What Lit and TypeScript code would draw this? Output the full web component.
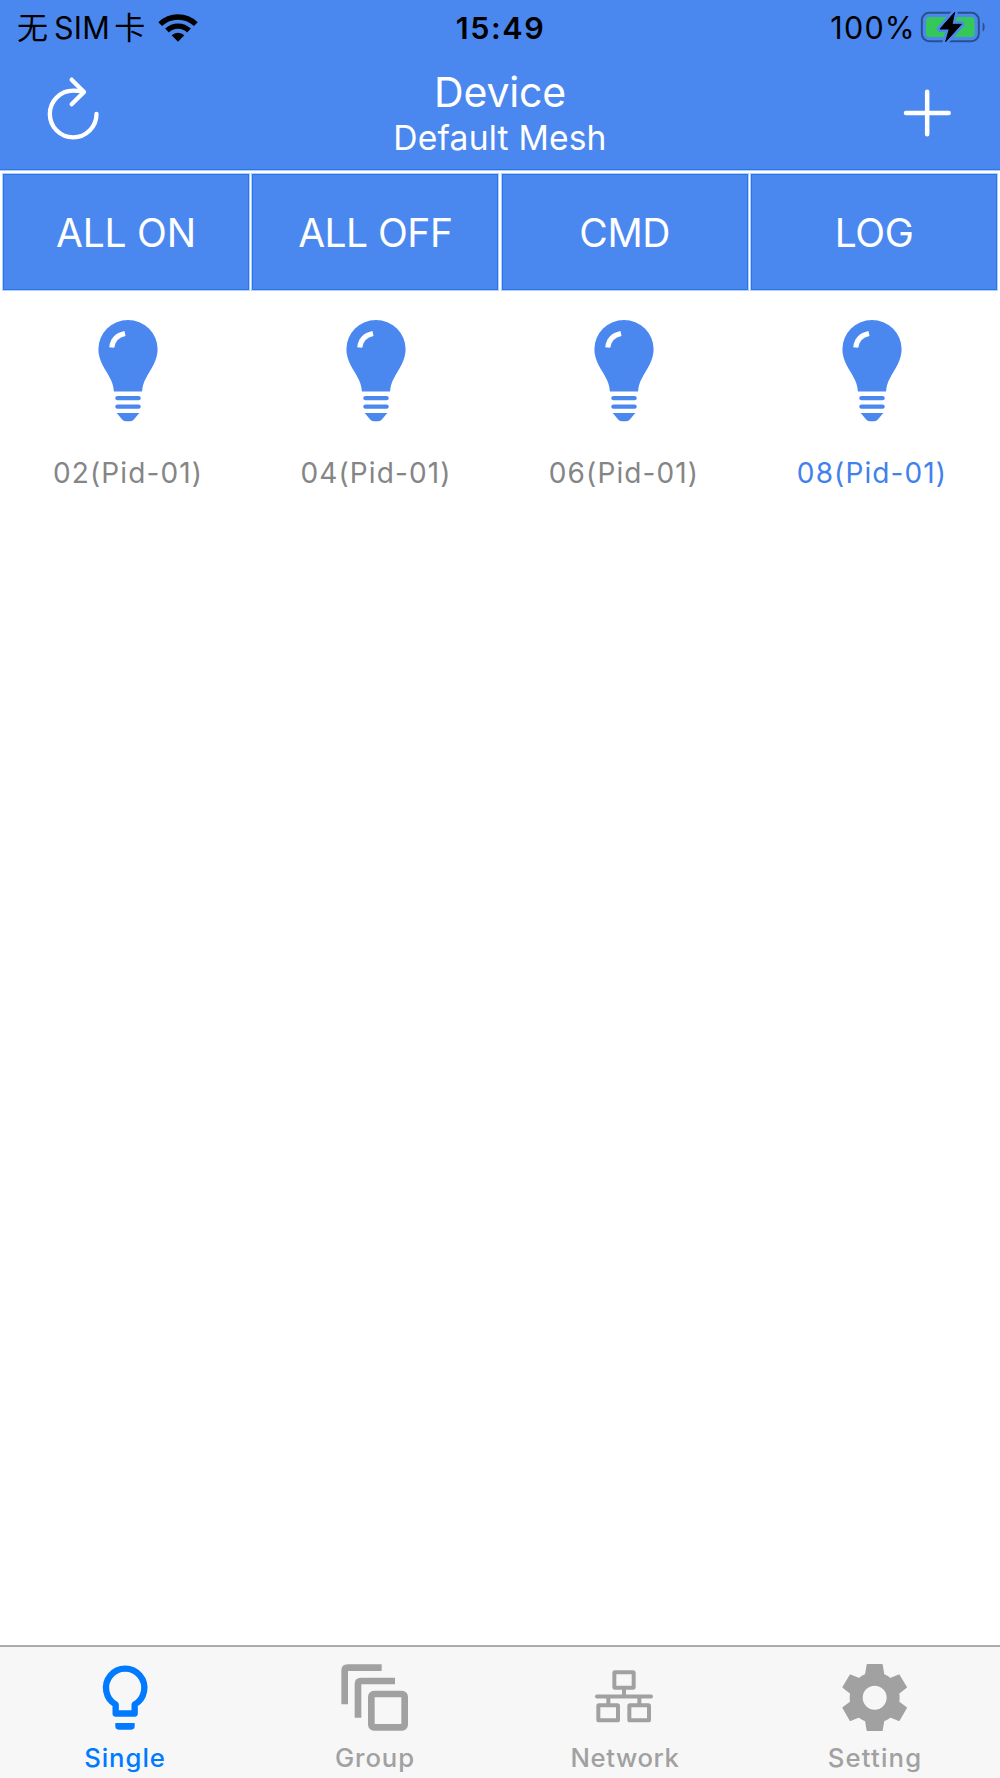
import { LitElement, html, css, svg } from "lit";

interface Spaced {
  text: string;
  spacing: number;
}

const ACTIONS: Spaced[] = [
  { text: "ALL ON", spacing: -0.22 },
  { text: "ALL OFF", spacing: -0.52 },
  { text: "CMD", spacing: -0.3 },
  { text: "LOG", spacing: -0.3 },
];

const DEVICES = [
  { name: "02(Pid-01)", connected: false },
  { name: "04(Pid-01)", connected: false },
  { name: "06(Pid-01)", connected: false },
  { name: "08(Pid-01)", connected: true },
];

const TAB_ICONS = {
  bulb: svg`<svg class="icon" viewBox="91 82 210 210">
    <path d="M168 209.5A57.5 57.5 0 1 1 225 209.5V236.5H168Z" fill="none" stroke="currentColor" stroke-width="19" stroke-linejoin="round"/>
    <path d="M167 265H225V275Q225 285 215 285H177Q167 285 167 275Z" fill="currentColor"/></svg>`,
  layers: svg`<svg class="icon" viewBox="90 82 210 210">
    <g fill="none" stroke="currentColor" stroke-width="20">
      <path d="M104 209V108Q104 99 113 99H215"/>
      <path d="M144 249V148Q144 139 153 139H255"/>
      <rect x="184" y="178" width="100" height="100" rx="8"/></g></svg>`,
  network: svg`<svg class="icon" viewBox="120 82 210 210">
    <g fill="none" stroke="currentColor" stroke-width="12">
      <rect x="193" y="113" width="58" height="46" rx="2"/>
      <path d="M222 164V186M175 186V208M268 186V208"/>
      <path d="M141 185.5H303" stroke-linecap="round"/>
      <rect x="145" y="212" width="59" height="45" rx="2"/>
      <rect x="238" y="212" width="59" height="45" rx="2"/></g></svg>`,
  gear: svg`<svg class="icon" viewBox="120 82 210 210">
    <path fill="currentColor" fill-rule="evenodd" stroke="currentColor" stroke-width="4" stroke-linejoin="round"
      d="M202 90H246L251 120Q262 124 271 132L297 121L319 158L296 176Q298 189 296 202L319 219L297 257L271 247Q262 254 251 258L246 287H202L197 258Q186 254 177 247L151 257L129 219L152 202Q150 189 152 176L129 158L151 121L177 132Q186 124 197 120ZM224 151A38 38 0 1 0 224 227A38 38 0 1 0 224 151Z"/></svg>`,
};

const TABS: (Spaced & { icon: keyof typeof TAB_ICONS })[] = [
  { text: "Single", spacing: 0.95, icon: "bulb" },
  { text: "Group", spacing: 0.9, icon: "layers" },
  { text: "Network", spacing: 0.6, icon: "network" },
  { text: "Setting", spacing: 1.2, icon: "gear" },
];

class StatusBar extends LitElement {
  static styles = css`
    :host {
      display: grid;
      grid-template-columns: 1fr auto 1fr;
      align-items: center;
      height: 54px;
      box-sizing: border-box;
      padding: 2px 16px 0 17px;
      color: #000;
      font: 400 30.5px/1 Inter, sans-serif;
    }
    .side { display: flex; align-items: center; }
    .right { justify-content: flex-end; }
    .cjk { font: 400 31px/1 "Noto Sans CJK SC", sans-serif; margin-top: -6px; }
    .sim { letter-spacing: 0.3px; margin: 0 4px 0 6px; }
    .wifi { width: 40px; height: 30px; margin: -3px 0 0 13px; }
    .time { font-weight: 600; letter-spacing: 1.6px; }
    .pct { letter-spacing: 1.2px; }
    .battery { width: 65px; height: 32px; margin: -3px -1px 0 4px; }
  `;
  render() {
    return html`
      <div class="side">
        <span class="cjk">无</span><span class="sim">SIM</span><span class="cjk">卡</span>
        <svg class="wifi" viewBox="478 36 120 90">
          <g fill="none" stroke="#000" stroke-width="16">
            <path d="M484.5 72.5A77 77 0 0 1 591.5 72.5"/>
            <path d="M505 91.5A47.5 47.5 0 0 1 571 91.5"/>
          </g>
          <path d="M519 106A27 27 0 0 1 557 106L538 125Z"/>
        </svg>
      </div>
      <span class="time">15:49</span>
      <div class="side right">
        <span class="pct">100%</span>
        <svg class="battery" viewBox="361 30 195 96">
          <rect x="366.5" y="35.5" width="171" height="85" rx="22" fill="none" stroke="#2a4f8c" stroke-width="6"/>
          <rect x="379" y="48" width="146" height="60" rx="11" fill="#35c759"/>
          <path d="M549 64Q555 68 555 78T549 92Z" fill="#2a4f8c"/>
          <path d="M465 34L421 84H449L438 122L485 70H457Z" fill="#4a88ef" stroke="#4a88ef" stroke-width="18" stroke-linejoin="round"/>
          <path d="M465 34L421 84H449L438 122L485 70H457Z" stroke="#000" stroke-width="3" stroke-linejoin="round"/>
        </svg>
      </div>
    `;
  }
}
customElements.define("status-bar", StatusBar);

class NavHeader extends LitElement {
  static styles = css`
    :host {
      display: grid;
      grid-template-columns: 1fr auto 1fr;
      align-items: start;
      height: 117px;
      box-sizing: border-box;
      padding: 0 46px;
      border-bottom: 1px solid #b5cffa;
      box-shadow: inset 0 -1px #2478ec;
      color: #fff;
      font-family: Inter, sans-serif;
    }
    .refresh { width: 55px; height: 66px; margin-top: 20.6px; }
    .add { width: 50px; height: 50px; margin: 33.6px 2px 0 0; justify-self: end; }
    .titles { text-align: center; padding-top: 14.6px; }
    .title { font-size: 41px; line-height: 47px; letter-spacing: -0.2px; }
    .subtitle { font-size: 33.6px; line-height: 43px; letter-spacing: 0.2px; }
  `;
  render() {
    return html`
      <svg class="refresh" viewBox="138 224 165 198" fill="none" stroke="#fff" stroke-width="13" stroke-linecap="round" stroke-linejoin="round">
        <path d="M289.5 341A70 70 0 1 1 219.5 271Q236 271 251 275"/>
        <path d="M215 238L252 275L215 312"/>
      </svg>
      <div class="titles">
        <div class="title">Device</div>
        <div class="subtitle">Default Mesh</div>
      </div>
      <svg class="add" viewBox="306 263 150 150" stroke="#fff" stroke-width="13.5" stroke-linecap="round">
        <path d="M318 338H446M381.5 274V402"/>
      </svg>
    `;
  }
}
customElements.define("nav-header", NavHeader);

class DeviceCell extends LitElement {
  static properties = { name: {}, connected: { type: Boolean } };
  declare name: string;
  declare connected: boolean;
  static styles = css`
    :host {
      display: flex;
      flex-direction: column;
      align-items: center;
      padding-top: 29px;
      font: 400 28px/34px Inter, sans-serif;
    }
    .bulb { width: 60px; height: 102px; }
    .label { margin-top: 34px; letter-spacing: 1.11px; color: #858585; }
    .connected { color: #4181ec; }
  `;
  render() {
    return html`
      <svg class="bulb" viewBox="0 0 60 102" fill="#4a88ef">
        <path d="M15.9 71.4C15.5 63 11.5 57 8 51C3.8 44 .4 37.5 .4 29A29.6 29 0 0 1 59.6 29C59.6 37.5 56.2 44 52 51C48.5 57 44.5 63 44.1 71.4Z"/>
        <path d="M27 13.5Q15 16 13.7 27.5" fill="none" stroke="#fff" stroke-width="5"/>
        <rect x="17.3" y="76" width="25.4" height="4.2" rx="2"/>
        <rect x="17.3" y="84.4" width="25.4" height="4.3" rx="2"/>
        <path d="M18.7 93H41.3L36.5 98.8Q34.6 101.3 32 101.3H28Q25.4 101.3 23.5 98.8Z"/>
      </svg>
      <span class="label ${this.connected ? "connected" : ""}">${this.name}</span>
    `;
  }
}
customElements.define("device-cell", DeviceCell);

class TabBar extends LitElement {
  static styles = css`
    :host {
      display: grid;
      grid-template-columns: repeat(4, 1fr);
      height: 133.5px;
      box-sizing: border-box;
      border-top: 2px solid #acacac;
      background: #f7f7f7;
      font: 450 25.7px/30px Inter, sans-serif;
    }
    .tab { display: flex; flex-direction: column; align-items: center; padding-top: 15.7px; color: #a1a1a1; }
    .active { color: #007aff; }
    .icon { display: block; width: 70px; height: 70px; }
    .label { margin-top: 10.9px; }
  `;
  render() {
    return TABS.map(
      (t, i) => html`<div class="tab ${i === 0 ? "active" : ""}">
        ${TAB_ICONS[t.icon]}
        <span class="label" style="letter-spacing:${t.spacing}px">${t.text}</span>
      </div>`
    );
  }
}
customElements.define("tab-bar", TabBar);

class AppRoot extends LitElement {
  static styles = css`
    :host {
      display: flex;
      flex-direction: column;
      width: 100%;
      height: 100vh;
      background: #fff;
      overflow: hidden;
    }
    .top { background: #4a88ef; }
    .actions {
      display: grid;
      grid-template-columns: repeat(4, 1fr);
      gap: 1.67px;
      padding: 2px 2px 0;
    }
    .action {
      display: flex;
      align-items: center;
      justify-content: center;
      height: 118px;
      box-sizing: border-box;
      border: 1px solid #b5cffa;
      box-shadow: inset 0 0 0 1px #2478ec;
      background: #4a88ef;
      color: #fff;
      font: 400 39px/1 Inter, sans-serif;
    }
    .devices {
      flex: 1;
      display: grid;
      grid-template-columns: repeat(4, 248px);
      align-content: start;
      padding: 0 4px;
    }
  `;
  render() {
    return html`
      <div class="top">
        <status-bar></status-bar>
        <nav-header></nav-header>
      </div>
      <div class="actions">
        ${ACTIONS.map((a) => html`<div class="action" style="letter-spacing:${a.spacing}px">${a.text}</div>`)}
      </div>
      <div class="devices">
        ${DEVICES.map((d) => html`<device-cell .name=${d.name} .connected=${d.connected}></device-cell>`)}
      </div>
      <tab-bar></tab-bar>
    `;
  }
}
customElements.define("app-root", AppRoot);
